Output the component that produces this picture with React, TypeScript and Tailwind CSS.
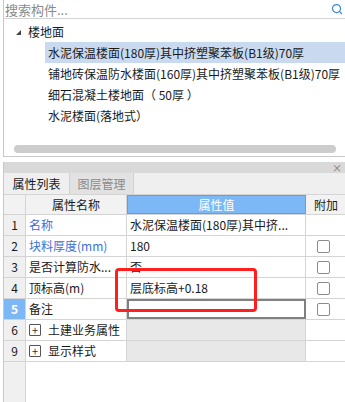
import { Search } from 'lucide-react';

const treeItems = [
  '水泥保温楼面(180厚)其中挤塑聚苯板(B1级)70厚',
  '铺地砖保温防水楼面(160厚)其中挤塑聚苯板(B1级)70厚',
  '细石混凝土楼地面（ 50厚 ）',
  '水泥楼面(落地式）',
];

const rows = [
  { no: '1', name: '名称', value: '水泥保温楼面(180厚)其中挤...', blue: true, check: false },
  { no: '2', name: '块料厚度(mm)', value: '180', blue: true, check: true },
  { no: '3', name: '是否计算防水...', value: '否', check: true },
  { no: '4', name: '顶标高(m)', value: '层底标高+0.18', check: true },
  { no: '5', name: '备注', value: '', check: true, active: true },
];

const groups = [
  { no: '6', name: '土建业务属性' },
  { no: '9', name: '显示样式' },
];

const Checkbox = () => <div className="w-[13px] h-[13px] rounded-[2px] border border-[#8c8c8c] bg-white" />;

const PlusBox = () => (
  <div className="w-[12px] h-[12px] border border-[#555] rounded-[1px] flex items-center justify-center text-[11px] leading-none text-[#333]">+</div>
);

export default function App() {
  return (
    <div className="w-[345px] h-[402px] bg-white relative overflow-hidden flex flex-col text-[12px] text-[#1a1a1a]" style={{ fontFamily: '"Microsoft YaHei", "Noto Sans CJK SC", sans-serif' }}>
      {/* Component tree */}
      <div className="ml-[3px] h-[157px] border-l border-b border-[#c8c8c8] flex flex-col">
        <div className="h-[19px] border-b border-[#d4d4d4] flex items-center pl-[1px] pr-[2px]">
          <span className="flex-1 text-[#8a8a8a] text-[13px] leading-none">搜索构件...</span>
          <Search size={12} strokeWidth={2.5} className="text-[#3b8ad9]" />
        </div>
        <div className="flex-1 flex flex-col pt-[2px]">
          <div className="h-[21px] flex items-center">
            <svg width="5" height="5" viewBox="0 0 5 5" className="ml-[12px] mt-[2px]">
              <path d="M5 0 L5 5 L0 5 Z" fill="#444" />
            </svg>
            <span className="ml-[7px]">楼地面</span>
          </div>
          {treeItems.map((t, i) => (
            <div key={t} className={`h-[21px] ml-[41px] pl-[3px] flex items-center whitespace-pre ${i === 0 ? 'bg-[#c9daf0]' : ''}`}>
              {t}
            </div>
          ))}
        </div>
        <div className="h-[8px] mx-[10px] mr-[9px] mb-[3px] rounded-full bg-[#cdcdcd]" />
      </div>

      {/* Properties panel */}
      <div className="mt-[5px] ml-[3px] flex-1 flex flex-col border-l border-[#c8c8c8]">
        <div className="h-[11px] bg-[#d9d9d9] flex items-center justify-end pr-[3px]">
          <span className="text-[10px] leading-none text-[#777]">×</span>
        </div>
        <div className="h-[22px] bg-[#efefef] flex border-b border-[#d4d4d4]">
          <div className="w-[65px] flex items-center justify-center text-[#1a1a1a]">属性列表</div>
          <div className="w-[65px] flex items-center justify-center bg-[#e2e2e2] text-[#8a8a8a] border-l border-r border-[#d0d0d0]">图层管理</div>
        </div>
        <div className="h-[20px] flex bg-[#f2f2f2] border-b border-[#d4d4d4]">
          <div className="w-[22px] border-r border-[#d4d4d4]" />
          <div className="w-[101px] border-r border-[#d4d4d4] flex items-center justify-center">属性名称</div>
          <div className="w-[179px] bg-[#7cb8f5] border border-[#5fa0e4] text-white flex items-center justify-center">属性值</div>
          <div className="flex-1 flex items-center pl-[8px]">附加</div>
        </div>
        {rows.map(r => (
          <div key={r.no} className="h-[21px] flex border-b border-[#d4d4d4]">
            <div className={`w-[22px] border-r border-[#d4d4d4] flex items-center justify-center ${r.active ? 'bg-[#7cb8f5] text-white font-bold' : 'bg-[#f0f0f0]'}`}>{r.no}</div>
            <div className={`w-[101px] border-r border-[#d4d4d4] flex items-center pl-[3px] whitespace-nowrap ${r.blue ? 'text-[#3a6fd8]' : ''}`}>{r.name}</div>
            <div className={`w-[179px] flex items-center pl-[3px] whitespace-nowrap ${r.active ? 'border-2 border-[#808080]' : 'border-r border-[#d4d4d4]'}`}>{r.value}</div>
            <div className="flex-1 flex items-center pl-[11px]">{r.check && <Checkbox />}</div>
          </div>
        ))}
        {groups.map(g => (
          <div key={g.no} className="h-[21px] flex border-b border-[#d4d4d4]">
            <div className="w-[22px] border-r border-[#d4d4d4] bg-[#f0f0f0] flex items-center justify-center">{g.no}</div>
            <div className="w-[101px] border-r border-[#d4d4d4] flex items-center pl-[3px] gap-[7px] whitespace-nowrap">
              <PlusBox />
              <span>{g.name}</span>
            </div>
            <div className="w-[179px] bg-[#e8e8e8] border-r border-[#d4d4d4]" />
            <div className="flex-1" />
          </div>
        ))}
        <div className="flex-1 flex">
          <div className="w-[22px] bg-[#f0f0f0] border-r border-[#d4d4d4]" />
        </div>
      </div>

      {/* Red highlight annotation */}
      <div className="absolute left-[115px] top-[268px] w-[142px] h-[44px] border-[3px] border-[#ff1f1f] rounded-[4px]" />
    </div>
  );
}
